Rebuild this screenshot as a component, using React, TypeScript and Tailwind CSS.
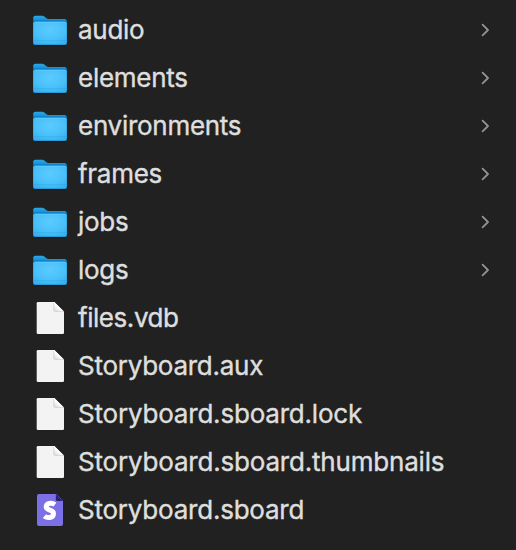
const folders = ['audio', 'elements', 'environments', 'frames', 'jobs', 'logs'];

const files = [
  { name: 'files.vdb', tracking: 'tracking-[-0.45px]' },
  { name: 'Storyboard.aux', tracking: 'tracking-[-0.26px]' },
  { name: 'Storyboard.sboard.lock', tracking: 'tracking-[-0.2px]' },
  { name: 'Storyboard.sboard.thumbnails', tracking: 'tracking-[-0.19px]' },
  { name: 'Storyboard.sboard', tracking: 'tracking-[-0.22px]' },
];

function FolderIcon() {
  return (
    <svg className="shrink-0" width="36" height="36" viewBox="0 0 36 36">
      <defs>
        <linearGradient id="folder-back" x2="0" y2="1">
          <stop stopColor="#2da9e8" />
          <stop offset="0.1" stopColor="#1c98dc" />
          <stop offset="0.22" stopColor="#0878c0" />
        </linearGradient>
        <radialGradient id="folder-front" cx="0.5" cy="0.35" r="0.75">
          <stop stopColor="#5ccbff" />
          <stop offset="0.6" stopColor="#49c0fa" />
          <stop offset="1" stopColor="#34ade9" />
        </radialGradient>
      </defs>
      <path d="M1.6 31.5H34.4Q34 34 32 34H4Q2 34 1.6 31.5Z" fill="#141414" opacity=".7" />
      <path d="M1.2 5.8Q1.2 3.8 3.4 3.8H10.3Q11.5 3.8 12.3 4.4L14.2 6Q15.2 6.9 16.5 6.9H32.6Q34.8 6.9 34.8 9V30.8Q34.8 33 32.6 33H3.4Q1.2 33 1.2 30.8Z" fill="url(#folder-back)" />
      <path d="M1.2 11.3Q1.2 9.8 2.9 9.8H33.1Q34.8 9.8 34.8 11.3V30.6Q34.8 32.8 32.6 32.8H3.4Q1.2 32.8 1.2 30.6Z" fill="url(#folder-front)" />
      <path d="M2.6 10.3H33.4" stroke="#69d0ff" strokeWidth=".7" />
      <path d="M2 28.5H34" stroke="#2ba3df" strokeWidth=".7" opacity=".5" />
      <path d="M2.2 32.4H33.8" stroke="#2197d6" strokeWidth=".8" opacity=".8" />
    </svg>
  );
}

function FileIcon() {
  return (
    <svg className="shrink-0" width="36" height="36" viewBox="0 0 36 36">
      <defs>
        <linearGradient id="file-fold" x1="0" y1="1" x2="1" y2="0">
          <stop stopColor="#d0d0d0" />
          <stop offset=".45" stopColor="#fff" />
        </linearGradient>
      </defs>
      <path d="M6 2H22.3L32 11.7V32.7Q32 34 30.7 34H6Q4.7 34 4.7 32.7V3.3Q4.7 2 6 2Z" fill="#f3f3f3" />
      <path d="M21.7 2H22.3L32 11.4H23.2Q21.7 11.4 21.7 9.9Z" fill="url(#file-fold)" />
      <path d="M21.7 3V9.9Q21.7 11.4 23.2 11.4H31" fill="none" stroke="#d2d2d2" strokeWidth=".8" />
    </svg>
  );
}

function BoardIcon() {
  return (
    <svg className="shrink-0" width="36" height="36" viewBox="0 0 36 36">
      <path d="M7 2H24.2L31 8.8V32Q31 34 29 34H7Q5 34 5 32V4Q5 2 7 2Z" fill="#7b70e6" />
      <path d="M23.8 2L31 9H25.3Q23.8 9 23.8 7.5Z" fill="#2b2078" />
      <path d="M23 12.5C19.4 10.2 14.3 11.2 14.2 14.8C14.1 18.9 21.7 17.2 21.5 21.6C21.3 26.2 15.3 26.5 12.4 24.1" fill="none" stroke="white" strokeWidth="5" />
    </svg>
  );
}

function Chevron() {
  return (
    <svg className="ml-auto shrink-0" width="10" height="16" viewBox="0 0 10 16" fill="none" stroke="#929292" strokeWidth="1.8" strokeLinecap="round" strokeLinejoin="round">
      <path d="M1.6 2.6L7 8L1.6 13.4" />
    </svg>
  );
}

export default function App() {
  return (
    <main className="h-[550px] w-[516px] overflow-hidden bg-[#212121] pt-[6px] font-[Inter,sans-serif] text-[26px] leading-[36px] text-[#dedede]">
      {folders.map((name) => (
        <div key={name} className="flex h-12 items-center pr-[25px] pl-8">
          <FolderIcon />
          <span className="ml-2.5 tracking-[-0.28px] [-webkit-text-stroke:0.4px_#dedede]">{name}</span>
          <Chevron />
        </div>
      ))}
      {files.map(({ name, tracking }) => (
        <div key={name} className="flex h-12 items-center pl-8">
          {name === 'Storyboard.sboard' ? <BoardIcon /> : <FileIcon />}
          <span className={`ml-2.5 [-webkit-text-stroke:0.4px_#dedede] ${tracking}`}>{name}</span>
        </div>
      ))}
    </main>
  );
}
